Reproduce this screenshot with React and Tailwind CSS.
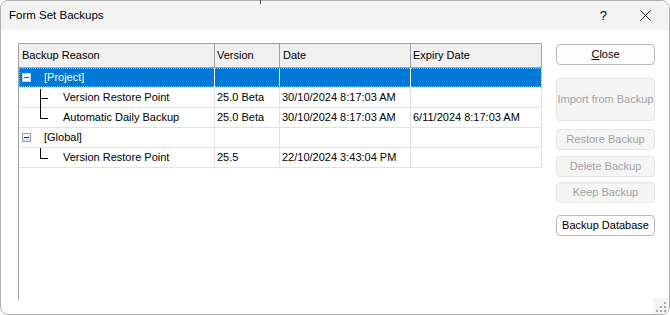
import React from "react";

const font = { fontFamily: '"Liberation Sans", Arial, sans-serif' };

function Expander({ selected }) {
  return (
    <span
      className={
        "inline-flex items-center justify-center w-[9px] h-[9px] border " +
        (selected
          ? "border-[#c8d6e6] bg-[#eef2f7]"
          : "border-[#8ea3bf] bg-gradient-to-b from-white to-[#d5dde8]")
      }
    >
      <span className={"block w-[5px] h-px " + (selected ? "bg-[#4a5a70]" : "bg-[#1f3350]")} />
    </span>
  );
}

function Connector({ last }) {
  return (
    <span className="relative w-[8px] h-[20px] shrink-0">
      <span
        className={
          "absolute left-0 top-0 w-px bg-black " + (last ? "h-[10px]" : "h-[19px] top-[1px]")
        }
      />
      <span className="absolute left-0 top-[10px] w-[8px] h-px bg-black" />
    </span>
  );
}

const rows = [
  { kind: "group", label: "[Project]", selected: true },
  { kind: "child", label: "Version Restore Point", version: "25.0 Beta", date: "30/10/2024 8:17:03 AM", expiry: "" },
  { kind: "child", label: "Automatic Daily Backup", version: "25.0 Beta", date: "30/10/2024 8:17:03 AM", expiry: "6/11/2024 8:17:03 AM", last: true },
  { kind: "group", label: "[Global]" },
  { kind: "child", label: "Version Restore Point", version: "25.5", date: "22/10/2024 3:43:04 PM", expiry: "", last: true },
];

function Row({ r }) {
  const sel = r.selected;
  const cellBorder = sel ? "border-r border-[#ffffff]" : "border-r border-[#e3e3e3]";
  return (
    <div
      className={
        "relative flex h-[20px] border-b text-[11px] leading-[19px] " +
        (sel ? "bg-[#0078d7] text-white border-[#e3e3e3]" : "text-black border-[#e3e3e3]")
      }
    >
      <div className={"w-[196px] flex items-center " + cellBorder}>
        {r.kind === "group" ? (
          <>
            <span className="ml-[3px] flex items-center">
              <Expander selected={sel} />
            </span>
            <span className="ml-[13px]">{r.label}</span>
          </>
        ) : (
          <>
            <span className="ml-[21px] flex">
              <Connector last={r.last} />
            </span>
            <span className="ml-[15px] whitespace-nowrap">{r.label}</span>
          </>
        )}
      </div>
      <div className={"w-[65px] pl-[2px] whitespace-nowrap " + cellBorder}>{r.version}</div>
      <div className={"w-[131px] pl-[2px] whitespace-nowrap " + cellBorder}>{r.date}</div>
      <div className={"w-[131px] pl-[2px] whitespace-nowrap " + cellBorder}>{r.expiry}</div>
      {sel && (
        <div className="absolute inset-0 border border-dotted border-[#f0a040] pointer-events-none" />
      )}
    </div>
  );
}

function Btn({ children, disabled, tall }) {
  return (
    <div
      className={
        "w-[99px] flex items-center justify-center rounded-[4px] border text-[11px] whitespace-nowrap " +
        (tall ? "h-[43px] " : "h-[21px] ") +
        (disabled
          ? "bg-[#f5f5f5] border-[#e5e5e5] text-[#a3a3a3]"
          : "bg-[#fdfdfd] border-[#b8b8b8] text-black")
      }
    >
      {children}
    </div>
  );
}

export default function App() {
  return (
    <div className="relative w-[670px] h-[315px] bg-white" style={font}>
      <div className="absolute left-[260px] top-0 w-px h-[4px] bg-[#555]" />
      <div className="h-full flex flex-col rounded-[8px] border border-[#b0b0b0] overflow-hidden bg-white">
        <div className="h-[29px] shrink-0 bg-[#f3f3f3] flex items-center pl-[8px] text-[11.5px] text-black">
          <span>Form Set Backups</span>
          <span className="ml-auto mr-[33px] text-[13px]">?</span>
          <svg width="11" height="11" viewBox="0 0 11 11" className="mr-[18px]">
            <path d="M0.5 0.5 L10.5 10.5 M10.5 0.5 L0.5 10.5" stroke="#1a1a1a" strokeWidth="1" />
          </svg>
        </div>
        <div className="relative flex-1 flex pt-[13px] pl-[17px]">
          <div className="w-[524px] h-[257px] border-t border-l border-[#a0a0a0]">
            <div className="flex h-[24px] bg-[#f0f0f0] border-b border-[#a0a0a0] text-[11px] leading-[22px] text-black">
              <div className="w-[196px] pl-[3px] border-r border-[#a0a0a0]">Backup Reason</div>
              <div className="w-[65px] pl-[2px] border-r border-[#a0a0a0]">Version</div>
              <div className="w-[131px] pl-[3px] border-r border-[#a0a0a0]">Date</div>
              <div className="w-[131px] pl-[2px] border-r border-[#a0a0a0]">Expiry Date</div>
            </div>
            {rows.map((r, i) => (
              <Row key={i} r={r} />
            ))}
          </div>
          <div className="ml-[14px] flex flex-col pt-[1px]">
            <Btn>
              <span>
                <span className="underline">C</span>lose
              </span>
            </Btn>
            <div className="h-[13px]" />
            <Btn disabled tall>Import from Backup</Btn>
            <div className="h-[8px]" />
            <Btn disabled>Restore Backup</Btn>
            <div className="h-[6px]" />
            <Btn disabled>Delete Backup</Btn>
            <div className="h-[5px]" />
            <Btn disabled>Keep Backup</Btn>
            <div className="h-[12px]" />
            <Btn>Backup Database</Btn>
          </div>
          <div className="absolute right-0 bottom-0 w-[16px] h-[16px] bg-[#f3f3f3]">
            <svg width="16" height="16" viewBox="0 0 16 16">
              {[
                [11, 4],
                [7, 8],
                [11, 8],
                [3, 12],
                [7, 12],
                [11, 12],
              ].map(([x, y], i) => (
                <rect key={i} x={x} y={y} width="2" height="2" fill="#a8a8a8" />
              ))}
            </svg>
          </div>
        </div>
      </div>
    </div>
  );
}
